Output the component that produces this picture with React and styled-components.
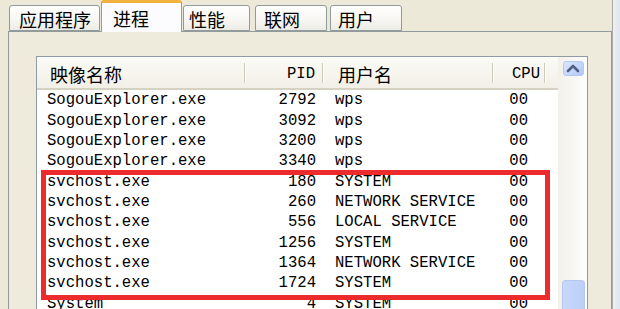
import React from "react";
import styled, { createGlobalStyle } from "styled-components";

const GlobalStyle = createGlobalStyle`
  html, body {
    margin: 0;
    padding: 0;
    background: #ece9d8;
  }
`;

const tabs = [
  { name: "应用程序", width: 91, gap: 0, pad: 9 },
  { name: "进程", width: 81, gap: 1, pad: 11, active: true },
  { name: "性能", width: 67, gap: 1, pad: 5 },
  { name: "联网", width: 72, gap: 5, pad: 8 },
  { name: "用户", width: 72, gap: 3, pad: 7 }
];

const processes = [
  { name: "SogouExplorer.exe", pid: 2792, user: "wps", cpu: "00" },
  { name: "SogouExplorer.exe", pid: 3092, user: "wps", cpu: "00" },
  { name: "SogouExplorer.exe", pid: 3200, user: "wps", cpu: "00" },
  { name: "SogouExplorer.exe", pid: 3340, user: "wps", cpu: "00" },
  { name: "svchost.exe", pid: 180, user: "SYSTEM", cpu: "00" },
  { name: "svchost.exe", pid: 260, user: "NETWORK SERVICE", cpu: "00" },
  { name: "svchost.exe", pid: 556, user: "LOCAL SERVICE", cpu: "00" },
  { name: "svchost.exe", pid: 1256, user: "SYSTEM", cpu: "00" },
  { name: "svchost.exe", pid: 1364, user: "NETWORK SERVICE", cpu: "00" },
  { name: "svchost.exe", pid: 1724, user: "SYSTEM", cpu: "00" },
  { name: "System", pid: 4, user: "SYSTEM", cpu: "00" }
];

const COLS = "208px 78px 170px 52px 1fr";

const Window = styled.div`
  position: relative;
  width: 620px;
  height: 309px;
  overflow: hidden;
  display: flex;
  background: #ece9d8;
  font-family: "Liberation Mono", "Noto Sans CJK SC", monospace;
  color: #000;
`;

const Content = styled.div`
  width: 612px;
  display: flex;
  flex-direction: column;
`;

const Edge = styled.div`
  flex: 1;
  border-left: 1px solid #a9aaa3;
  background: linear-gradient(90deg, #eef0f3, #dfe5ee);
`;

const TabStrip = styled.div`
  height: 31px;
  display: flex;
  align-items: flex-end;
  padding-left: 9px;
`;

const Tab = styled.div`
  box-sizing: border-box;
  width: ${p => p.$w}px;
  margin-left: ${p => p.$gap}px;
  padding-left: ${p => p.$pad}px;
  height: ${p => (p.$active ? 32 : 26)}px;
  margin-bottom: ${p => (p.$active ? -1 : 0)}px;
  position: relative;
  z-index: ${p => (p.$active ? 2 : 0)};
  display: flex;
  align-items: center;
  padding-top: ${p => (p.$active ? 0 : 2)}px;
  font-family: "Noto Sans CJK SC", sans-serif;
  font-size: 18px;
  border: 1px solid #919b9c;
  border-bottom: ${p => (p.$active ? "none" : "1px solid #919b9c")};
  border-top: ${p => (p.$active ? "3px solid #f3b23c" : "1px solid #919b9c")};
  border-radius: 3px 3px 0 0;
  background: ${p =>
    p.$active
      ? "#fcfcfe"
      : "linear-gradient(180deg, #ffffff 0%, #f7f6f2 60%, #ecebe5 100%)"};
`;

const Panel = styled.div`
  flex: 1;
  margin-left: 8px;
  border: 1px solid #919b9c;
  border-bottom: none;
  background: #eeebdd;
  padding: 24px 0 0 27px;
`;

const ListView = styled.div`
  width: 550px;
  height: 260px;
  border: 1px solid #8f9aa5;
  background: #fff;
  display: flex;
  overflow: hidden;
`;

const Table = styled.div`
  flex: 1;
  display: flex;
  flex-direction: column;
`;

const HeaderRow = styled.div`
  display: grid;
  grid-template-columns: ${COLS};
  height: 31px;
  border-bottom: 2px solid #d6d2c2;
  background: linear-gradient(180deg, #fbfbf8 0%, #f1efe6 100%);
`;

const HeaderCell = styled.div`
  position: relative;
  display: flex;
  align-items: center;
  justify-content: ${p => (p.$right ? "flex-end" : "flex-start")};
  padding-left: ${p => p.$pl || 0}px;
  padding-right: ${p => p.$pr || 0}px;
  padding-top: 2px;
  font-family: ${p =>
    p.$cjk
      ? '"Noto Sans CJK SC", sans-serif'
      : '"Liberation Mono", monospace'};
  font-size: ${p => (p.$cjk ? 18 : 15.6)}px;
  &::after {
    content: ${p => (p.$sep ? '""' : "none")};
    position: absolute;
    right: 0;
    top: 6px;
    bottom: 5px;
    width: 1px;
    background: #cdcab9;
    box-shadow: 1px 0 0 #fff;
  }
`;

const Row = styled.div`
  display: grid;
  grid-template-columns: ${COLS};
  height: 20.35px;
  align-items: center;
  font-size: 15.6px;
  line-height: 20px;
  white-space: pre;
`;

const Cell = styled.div`
  text-align: ${p => (p.$right ? "right" : "left")};
  padding-left: ${p => p.$pl || 0}px;
  padding-right: ${p => p.$pr || 0}px;
`;

const ScrollBar = styled.div`
  width: 28px;
  display: flex;
  flex-direction: column;
  align-items: center;
  border-left: 1px solid #f0efe9;
  background: linear-gradient(90deg, #f3f1ea, #fdfdfb);
`;

const ScrollButton = styled.div`
  box-sizing: border-box;
  margin-top: 4px;
  width: 21px;
  height: 23px;
  border: 1px solid #b4c8f4;
  border-radius: 3px;
  background: linear-gradient(135deg, #dbe6fd 0%, #c3d4fb 60%, #b1c7f6 100%);
  display: flex;
  align-items: center;
  justify-content: center;
`;

const Thumb = styled.div`
  box-sizing: border-box;
  margin-top: 204px;
  width: 23px;
  height: 60px;
  border: 1px solid #b6c9f4;
  border-radius: 3px;
  background: linear-gradient(90deg, #c9d8fb, #bccff8);
`;

const Highlight = styled.div`
  position: absolute;
  left: 41px;
  top: 170px;
  width: 509px;
  height: 130px;
  box-sizing: border-box;
  border: 5px solid #ec2b2d;
  pointer-events: none;
`;

export default function App() {
  return (
    <>
      <GlobalStyle />
      <Window>
        <Content>
          <TabStrip>
            {tabs.map(t => (
              <Tab
                key={t.name}
                $w={t.width}
                $gap={t.gap}
                $pad={t.pad}
                $active={t.active}
              >
                {t.name}
              </Tab>
            ))}
          </TabStrip>
          <Panel>
            <ListView>
              <Table>
                <HeaderRow>
                  <HeaderCell $cjk $pl={13} $sep>
                    映像名称
                  </HeaderCell>
                  <HeaderCell $right $pr={8} $sep>
                    PID
                  </HeaderCell>
                  <HeaderCell $cjk $pl={15} $sep>
                    用户名
                  </HeaderCell>
                  <HeaderCell $right $pr={5} $sep>
                    CPU
                  </HeaderCell>
                  <HeaderCell />
                </HeaderRow>
                {processes.map((p, i) => (
                  <Row key={i}>
                    <Cell $pl={10}>{p.name}</Cell>
                    <Cell $right $pr={7}>
                      {p.pid}
                    </Cell>
                    <Cell $pl={12}>{p.user}</Cell>
                    <Cell $right $pr={17}>
                      {p.cpu}
                    </Cell>
                    <Cell />
                  </Row>
                ))}
              </Table>
              <ScrollBar>
                <ScrollButton>
                  <svg width="14" height="10" viewBox="0 0 14 10">
                    <path
                      d="M2 8 L7 3 L12 8"
                      fill="none"
                      stroke="#4d6185"
                      strokeWidth="2.6"
                      strokeLinecap="round"
                      strokeLinejoin="round"
                    />
                  </svg>
                </ScrollButton>
                <Thumb />
              </ScrollBar>
            </ListView>
          </Panel>
        </Content>
        <Edge />
        <Highlight />
      </Window>
    </>
  );
}
